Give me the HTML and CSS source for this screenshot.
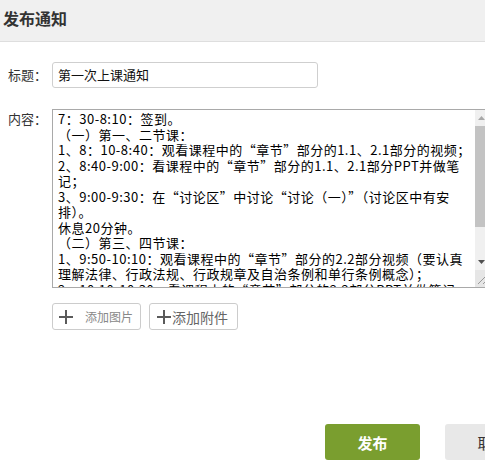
FILE: index.html
```html
<!DOCTYPE html>
<html lang="zh-CN">
<head>
<meta charset="utf-8">
<link rel="stylesheet" href="styles.css">
</head>
<body>
<div class="page">
  <div class="header"><span class="title">发布通知</span></div>
  <div class="form">
    <div class="row row-title">
      <span class="label">标题：</span>
      <div class="input">第一次上课通知</div>
    </div>
    <div class="row row-content">
      <span class="label label-content">内容：</span>
      <div class="textarea">
        <div class="text">
          <div>7：30-8:10：签到。</div>
          <div>（一）第一、二节课：</div>
          <div>1、8：10-8:40：观看课程中的“章节”部分的1.1、2.1部分的视频；</div>
          <div>2、8:40-9:00：看课程中的“章节”部分的1.1、2.1部分PPT并做笔</div>
          <div>记；</div>
          <div>3、9:00-9:30：在“讨论区”中讨论“讨论（一）”（讨论区中有安</div>
          <div>排）。</div>
          <div>休息20分钟。</div>
          <div>（二）第三、四节课：</div>
          <div>1、9:50-10:10：观看课程中的“章节”部分的2.2部分视频（要认真</div>
          <div>理解法律、行政法规、行政规章及自治条例和单行条例概念）；</div>
          <div>2、10:10-10:30：看课程中的“章节”部分的2.2部分PPT并做笔记；</div>
        </div>
        <div class="scrollbar">
          <div class="sb-btn sb-up"><svg width="7" height="4" viewBox="0 0 7 4"><path d="M0 4 L3.5 0 L7 4 Z" fill="#a8a8a8"/></svg></div>
          <div class="sb-thumb"></div>
          <div class="sb-track"></div>
          <div class="sb-btn sb-down"><svg width="7" height="4" viewBox="0 0 7 4"><path d="M0 0 L3.5 4 L7 0 Z" fill="#505050"/></svg></div>
          <div class="sb-resize"><svg width="17" height="17" viewBox="0 0 17 17"><path d="M3 14 L14 3 M8 14 L14 8" stroke="#9a9a9a" stroke-width="1" fill="none"/></svg></div>
        </div>
      </div>
    </div>
    <div class="row row-buttons">
      <div class="btn-add btn-img"><svg class="plus" width="14" height="14" viewBox="0 0 14 14"><path d="M7 0 V14 M0 7 H14" stroke="#5a5a5a" stroke-width="2" fill="none"/></svg><span class="add-text">添加图片</span></div>
      <div class="btn-add btn-file"><svg class="plus" width="14" height="14" viewBox="0 0 14 14"><path d="M7 0 V14 M0 7 H14" stroke="#5a5a5a" stroke-width="2" fill="none"/></svg><span class="add-text2">添加附件</span></div>
    </div>
    <div class="footer">
      <div class="btn-publish">发布</div>
      <div class="btn-cancel">取消</div>
    </div>
  </div>
</div>
</body>
</html>
```
FILE: styles.css
```css
html, body {
  margin: 0;
  padding: 0;
  background: #fff;
  overflow: hidden;
}
body {
  width: 485px;
  height: 463px;
  font-family: "Noto Sans CJK SC", "Noto Sans", sans-serif;
  color: #333;
}
.page {
  width: 485px;
  height: 463px;
  overflow: hidden;
}
.header {
  height: 41px;
  background: #f0f0f0;
  border-bottom: 1px solid #dedede;
  display: flex;
  align-items: center;
  padding-left: 3px;
}
.title {
  font-size: 16px;
  font-weight: 700;
  color: #333;
  line-height: 20px;
  margin-top: -6px;
}
.form {
  display: flex;
  flex-direction: column;
}
.row {
  display: flex;
  align-items: flex-start;
}
.label {
  width: 44px;
  padding-left: 8px;
  font-size: 13px;
  line-height: 26px;
  color: #333;
  flex-shrink: 0;
  white-space: nowrap;
}
.row-title {
  margin-top: 20px;
}
.input {
  width: 266px;
  height: 26px;
  box-sizing: border-box;
  border: 1px solid #cfcfcf;
  border-radius: 3px;
  padding-left: 5px;
  font-size: 13px;
  line-height: 23px;
  color: #111;
  white-space: nowrap;
}
.row-content {
  margin-top: 21px;
}
.label-content {
  line-height: 20px;
}
.textarea {
  width: 440px;
  height: 179px;
  box-sizing: border-box;
  border: 1px solid #a9a9a9;
  border-right: none;
  display: flex;
  flex-shrink: 0;
  overflow: hidden;
}
.text {
  width: 422px;
  flex-shrink: 0;
  padding: 1px 0 0 5px;
  box-sizing: border-box;
  font-size: 13px;
  line-height: 15.5px;
  letter-spacing: 0.5px;
  color: #000;
  white-space: nowrap;
  overflow: hidden;
}
.scrollbar {
  width: 17px;
  flex-shrink: 0;
  display: flex;
  flex-direction: column;
  background: #f0f0f0;
}
.sb-btn {
  height: 16px;
  display: flex;
  align-items: center;
  justify-content: center;
  padding-right: 5px;
  flex-shrink: 0;
}
.sb-thumb {
  height: 101px;
  background: #c3c3c3;
  margin: 0 6px 0 0;
  flex-shrink: 0;
}
.sb-track {
  flex: 1;
}
.sb-resize {
  height: 17px;
  background: #e6e6e6;
  flex-shrink: 0;
}
.sb-resize svg {
  display: block;
}
.row-buttons {
  margin-top: 15px;
  padding-left: 52px;
  gap: 8px;
}
.btn-add {
  width: 89px;
  height: 27px;
  box-sizing: border-box;
  border: 1px solid #cccccc;
  border-radius: 3px;
  display: flex;
  align-items: center;
  background: #fff;
  white-space: nowrap;
}
.plus {
  display: block;
  flex-shrink: 0;
}
.btn-img .plus {
  margin-left: 6px;
}
.add-text {
  font-size: 12px;
  color: #888;
  margin-left: 12px;
}
.btn-file .plus {
  margin-left: 7px;
  margin-right: 1px;
}
.add-text2 {
  font-size: 14px;
  color: #666;
}
.footer {
  display: flex;
  margin-top: 94px;
  padding-left: 325px;
  gap: 25px;
  white-space: nowrap;
}
.btn-publish, .btn-cancel {
  width: 95px;
  height: 36px;
  border-radius: 3px;
  display: flex;
  align-items: center;
  justify-content: center;
  font-size: 15px;
  flex-shrink: 0;
}
.btn-publish {
  background: #7a9e2f;
  color: #fff;
  font-weight: 700;
}
.btn-cancel {
  background: #e8e8e8;
  color: #333;
}
```
